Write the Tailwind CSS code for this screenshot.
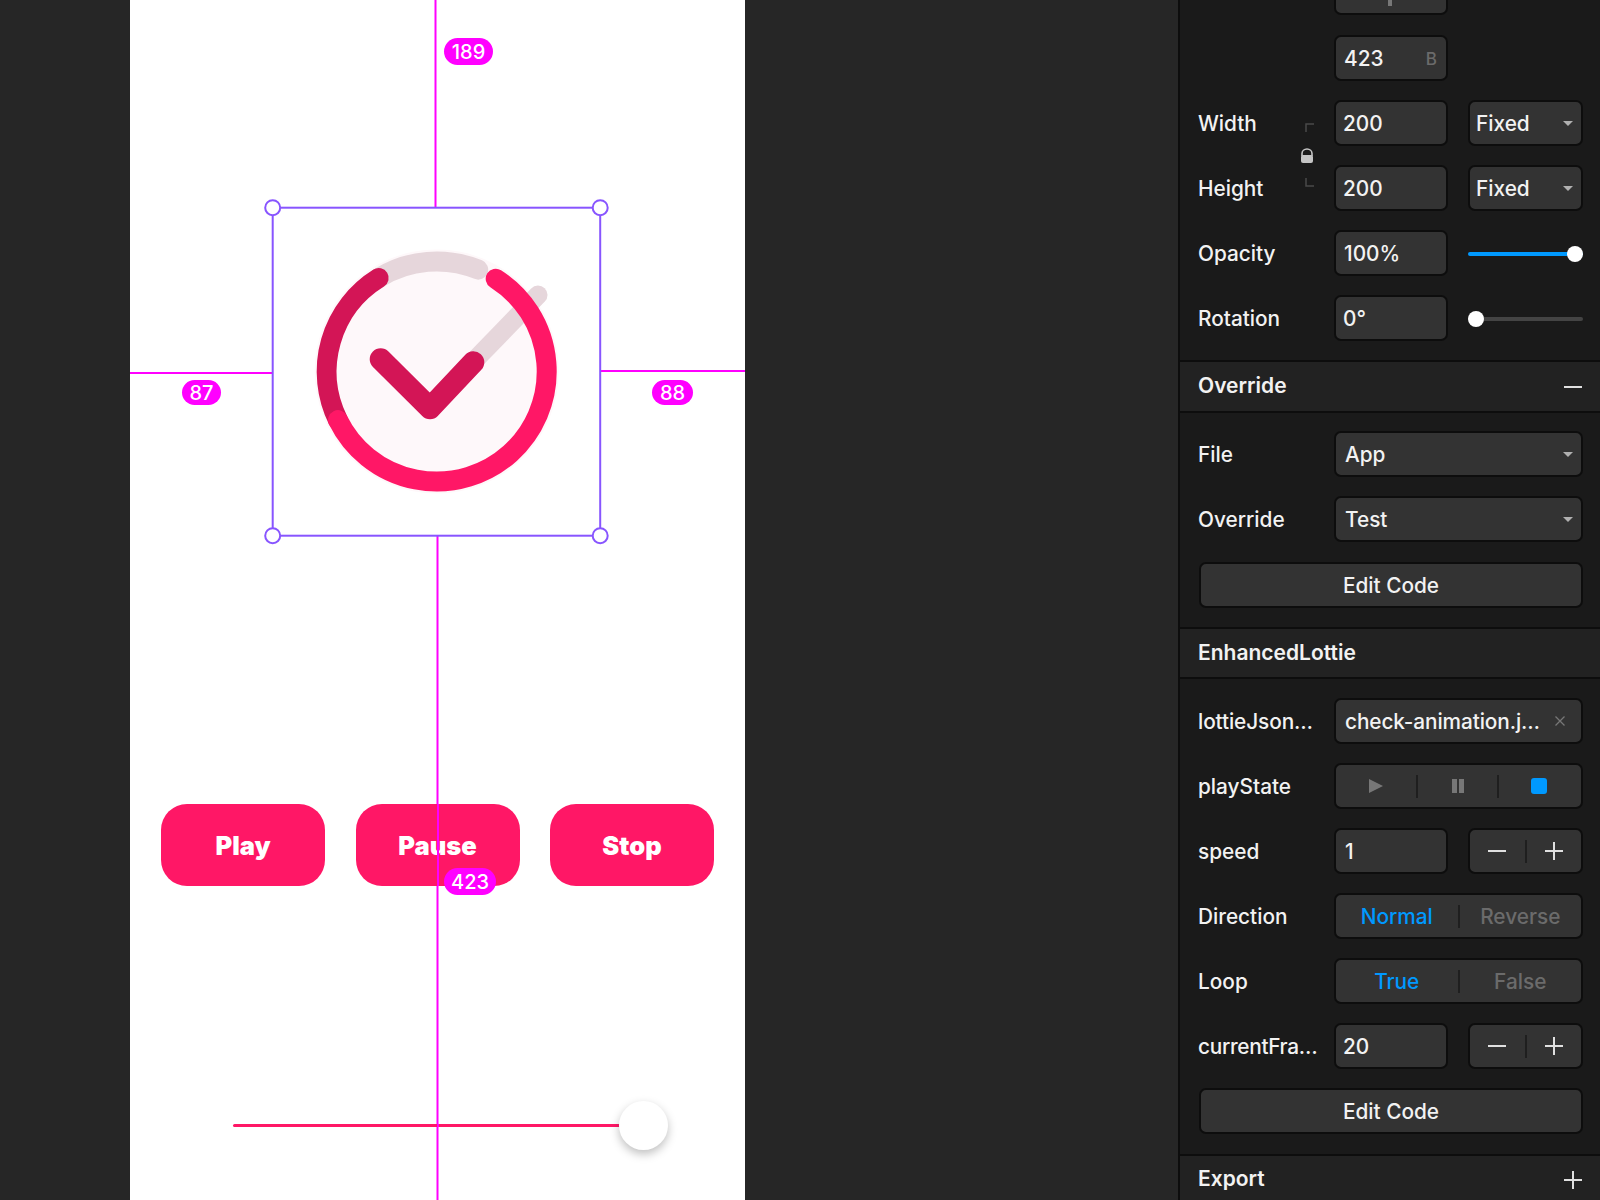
<!DOCTYPE html>
<html lang="en">
<head>
    <meta charset="UTF-8">
    <title>Framer - EnhancedLottie</title>
    <script src="https://cdn.jsdelivr.net/npm/@tailwindcss/browser@4"></script>
</head>
<body class="bg-[#262626] font-['Inter',sans-serif] text-[#f2f2f2] text-[20.8px] font-[450] leading-[21px] overflow-hidden">
<div class="flex h-[1200px] w-[1600px] overflow-hidden">

    <!-- Canvas -->
    <div class="relative w-[1178px] h-full bg-[#262626]">
        <!-- Artboard -->
        <div class="absolute left-[130px] top-0 w-[615px] h-[1200px] bg-white"></div>

        <!-- Lottie preview and selection -->
        <svg class="absolute left-0 top-0" width="1178" height="1200" viewBox="0 0 1178 1200" fill="none">
            <circle cx="436.7" cy="371.5" r="122" fill="#fef8fa"/>
            <path d="M378.7 278 A110 110 0 0 1 478.2 269.6" stroke="#e6d6db" stroke-width="20" stroke-linecap="round"/>
            <path d="M473 362 L538 295" stroke="#e6d6db" stroke-width="19" stroke-linecap="round"/>
            <path d="M378.7 278 A110 110 0 0 0 338 420.1" stroke="#d31556" stroke-width="20" stroke-linecap="round"/>
            <path d="M338 420.1 A110 110 0 1 0 495.7 278.7" stroke="#ff1766" stroke-width="20" stroke-linecap="round"/>
            <path d="M380.7 359.3 L430 408.3 L473.3 362.3" stroke="#d31556" stroke-width="22" stroke-linecap="round" stroke-linejoin="round"/>

            <!-- Distance guides -->
            <path d="M435.5 0 V207 M437.5 536 V1200 M130 373 H272 M601 371 H745" stroke="#ff00ff" stroke-width="2"/>

            <!-- Selection box -->
            <rect x="272.7" y="207.7" width="327.5" height="328" stroke="#8855ff" stroke-width="2"/>
            <g fill="#ffffff" stroke="#8855ff" stroke-width="2">
                <circle cx="272.7" cy="207.7" r="7.5"/>
                <circle cx="600.2" cy="207.7" r="7.5"/>
                <circle cx="272.7" cy="535.7" r="7.5"/>
                <circle cx="600.2" cy="535.7" r="7.5"/>
            </g>
        </svg>

        <!-- Play / Pause / Stop -->
        <div class="absolute left-[161px] top-[804px] w-[553px] h-[82px] flex justify-between text-white text-[25.5px] leading-none font-black">
            <div class="w-[164px] rounded-[26px] bg-[#ff1766] flex items-center justify-center pt-[2px]">Play</div>
            <div class="w-[164px] rounded-[26px] bg-[#ff1766] flex items-center justify-center pt-[2px]">Pause</div>
            <div class="w-[164px] rounded-[26px] bg-[#ff1766] flex items-center justify-center pt-[2px]">Stop</div>
        </div>

        <!-- Guide over the buttons -->
        <div class="absolute left-[436.5px] top-[804px] w-[2px] h-[82px] bg-[#ff00ff]"></div>

        <!-- Slider -->
        <div class="absolute left-[233px] top-[1124px] w-[387px] h-[3px] bg-[#ff1766] rounded-full"></div>
        <div class="absolute left-[436.5px] top-[1124px] w-[2px] h-[3px] bg-[#ff00ff]"></div>
        <div class="absolute left-[619px] top-[1101px] w-[49px] h-[49px] rounded-full bg-white shadow-[0_4px_10px_rgba(0,0,0,0.25)]"></div>

        <!-- Measure badges -->
        <div class="absolute left-[444px] top-[38px] w-[49px] h-[27px] rounded-full bg-[#ff00ff] text-white text-[20px] leading-none font-medium flex items-center justify-center">189</div>
        <div class="absolute left-[182px] top-[380px] w-[39px] h-[25px] rounded-full bg-[#ff00ff] text-white text-[20px] leading-none font-medium flex items-center justify-center">87</div>
        <div class="absolute left-[652px] top-[380px] w-[41px] h-[25px] rounded-full bg-[#ff00ff] text-white text-[20px] leading-none font-medium flex items-center justify-center">88</div>
        <div class="absolute left-[444px] top-[868px] w-[52px] h-[27px] rounded-full bg-[#ff00ff] text-white text-[20px] leading-none font-medium flex items-center justify-center">423</div>
    </div>

    <!-- Properties panel -->
    <div class="w-[422px] h-full border-l-2 border-[#0d0d0d] bg-[#1a1a1a] flex flex-col overflow-hidden">

        <!-- Position, size -->
        <div class="pl-[18px] pr-[17px]">
            <div class="flex items-center h-[46px] mt-[-31px]">
                <div class="w-[136px]"></div>
                <div class="w-[114px] h-full rounded-[7px] border-2 border-[#0d0d0d] bg-[#333333] relative">
                    <div class="absolute left-[52px] bottom-[7px] w-[4px] h-[6px] bg-[#777777]"></div>
                </div>
            </div>
            <div class="flex items-center h-[46px] mt-[20px]">
                <div class="w-[136px]"></div>
                <div class="w-[114px] h-full rounded-[7px] border-2 border-[#0d0d0d] bg-[#333333] flex items-center justify-between pl-[8px] pr-[9px]"><span>423</span><span class="text-[#6b6b6b] text-[17px] pt-[2px]">B</span></div>
            </div>
            <div class="flex items-center h-[46px] mt-[19px] relative">
                <div class="w-[136px]">Width</div>
                <div class="w-[114px] h-full rounded-[7px] border-2 border-[#0d0d0d] bg-[#333333] flex items-center pl-[7px]">200</div>
                <div class="w-[115px] ml-[20px] h-full rounded-[7px] border-2 border-[#0d0d0d] bg-[#333333] flex items-center justify-between pl-[6px] pr-[8px]"><span>Fixed</span><svg width="10" height="5" viewBox="0 0 10 5"><path d="M0 0H10L5 5Z" fill="#b0b0b0"/></svg></div>
                <svg class="absolute left-[107px] top-[23px]" width="9" height="9" viewBox="0 0 9 9" fill="none"><path d="M1 9V1H9" stroke="#4a4a4a" stroke-width="1.5"/></svg>
                <svg class="absolute left-[103px] top-[48px]" width="12" height="15" viewBox="0 0 12 15" fill="none"><path d="M1 8V5.5a5 4.5 0 0 1 10 0V8" stroke="#c4c4c4" stroke-width="1.6"/><rect y="7" width="12" height="8" rx="2" fill="#c4c4c4"/></svg>
            </div>
            <div class="flex items-center h-[46px] mt-[19px] relative">
                <div class="w-[136px]">Height</div>
                <div class="w-[114px] h-full rounded-[7px] border-2 border-[#0d0d0d] bg-[#333333] flex items-center pl-[7px]">200</div>
                <div class="w-[115px] ml-[20px] h-full rounded-[7px] border-2 border-[#0d0d0d] bg-[#333333] flex items-center justify-between pl-[6px] pr-[8px]"><span>Fixed</span><svg width="10" height="5" viewBox="0 0 10 5"><path d="M0 0H10L5 5Z" fill="#b0b0b0"/></svg></div>
                <svg class="absolute left-[107px] top-[13px]" width="9" height="9" viewBox="0 0 9 9" fill="none"><path d="M1 0V8H9" stroke="#4a4a4a" stroke-width="1.5"/></svg>
            </div>
            <div class="flex items-center h-[46px] mt-[19px]">
                <div class="w-[136px]">Opacity</div>
                <div class="w-[114px] h-full rounded-[7px] border-2 border-[#0d0d0d] bg-[#333333] flex items-center pl-[8px]">100%</div>
                <div class="w-[115px] ml-[20px] mt-[2px] h-[4px] rounded-full bg-[#0099ff] relative">
                    <div class="absolute right-0 top-[-6px] w-[16px] h-[16px] rounded-full bg-white"></div>
                </div>
            </div>
            <div class="flex items-center h-[46px] mt-[19px]">
                <div class="w-[136px]">Rotation</div>
                <div class="w-[114px] h-full rounded-[7px] border-2 border-[#0d0d0d] bg-[#333333] flex items-center pl-[7px]">0°</div>
                <div class="w-[115px] ml-[20px] mt-[2px] h-[4px] rounded-full bg-[#444444] relative">
                    <div class="absolute left-0 top-[-6px] w-[16px] h-[16px] rounded-full bg-white"></div>
                </div>
            </div>
        </div>

        <!-- Override -->
        <div class="mt-[19px] h-[53px] shrink-0 border-y-2 border-[#0d0d0d] bg-[#222222] flex items-center justify-between px-[18px] text-[21px] font-semibold">
            <span class="pb-[2px]">Override</span>
            <svg width="18" height="2" viewBox="0 0 18 2"><path d="M0 1H18" stroke="#e0e0e0" stroke-width="2"/></svg>
        </div>
        <div class="pl-[18px] pr-[17px]">
            <div class="flex items-center h-[46px] mt-[18px]">
                <div class="w-[136px]">File</div>
                <div class="w-[249px] h-full rounded-[7px] border-2 border-[#0d0d0d] bg-[#333333] flex items-center justify-between pl-[9px] pr-[8px]"><span>App</span><svg width="10" height="5" viewBox="0 0 10 5"><path d="M0 0H10L5 5Z" fill="#b0b0b0"/></svg></div>
            </div>
            <div class="flex items-center h-[46px] mt-[19px]">
                <div class="w-[136px]">Override</div>
                <div class="w-[249px] h-full rounded-[7px] border-2 border-[#0d0d0d] bg-[#333333] flex items-center justify-between pl-[9px] pr-[8px]"><span>Test</span><svg width="10" height="5" viewBox="0 0 10 5"><path d="M0 0H10L5 5Z" fill="#b0b0b0"/></svg></div>
            </div>
            <div class="ml-[1px] mt-[20px] h-[46px] rounded-[7px] border-2 border-[#0d0d0d] bg-[#333333] flex items-center justify-center">Edit Code</div>
        </div>

        <!-- EnhancedLottie -->
        <div class="mt-[19px] h-[52px] shrink-0 border-y-2 border-[#0d0d0d] bg-[#222222] flex items-center px-[18px] pb-[2px] text-[21px] font-semibold">EnhancedLottie</div>
        <div class="pl-[18px] pr-[17px]">
            <div class="flex items-center h-[46px] mt-[19px]">
                <div class="w-[136px] tracking-[-0.1px]">lottieJson…</div>
                <div class="w-[249px] h-full rounded-[7px] border-2 border-[#0d0d0d] bg-[#333333] flex items-center justify-between pl-[9px] pr-[16px]"><span class="tracking-[-0.1px]">check-animation.j…</span><svg width="10" height="10" viewBox="0 0 10 10" fill="none"><path d="M0.5 0.5L9.5 9.5M9.5 0.5L0.5 9.5" stroke="#777777" stroke-width="1.3"/></svg></div>
            </div>
            <div class="flex items-center h-[46px] mt-[19px]">
                <div class="w-[136px]">playState</div>
                <div class="w-[249px] h-full rounded-[7px] border-2 border-[#0d0d0d] bg-[#333333] flex items-center">
                    <div class="flex-1 flex items-center justify-center"><svg width="14" height="14" viewBox="0 0 14 14"><path d="M0 0L14 7L0 14Z" fill="#777777"/></svg></div>
                    <div class="w-[2px] h-[23px] bg-[#1f1f1f]"></div>
                    <div class="flex-1 flex items-center justify-center"><svg width="12" height="14" viewBox="0 0 12 14" fill="#777777"><rect width="5" height="14"/><rect x="7" width="5" height="14"/></svg></div>
                    <div class="w-[2px] h-[23px] bg-[#1f1f1f]"></div>
                    <div class="flex-1 flex items-center justify-center pr-[2px]"><div class="w-[16px] h-[16px] rounded-[3px] bg-[#0099ff]"></div></div>
                </div>
            </div>
            <div class="flex items-center h-[46px] mt-[19px]">
                <div class="w-[136px]">speed</div>
                <div class="w-[114px] h-full rounded-[7px] border-2 border-[#0d0d0d] bg-[#333333] flex items-center pl-[9px]">1</div>
                <div class="w-[115px] ml-[20px] h-full rounded-[7px] border-2 border-[#0d0d0d] bg-[#333333] flex items-center">
                    <div class="flex-1 flex items-center justify-center"><svg width="18" height="18" viewBox="0 0 18 18"><path d="M0 9H18" stroke="#e0e0e0" stroke-width="2"/></svg></div>
                    <div class="w-[2px] h-[23px] bg-[#1f1f1f]"></div>
                    <div class="flex-1 flex items-center justify-center"><svg width="18" height="18" viewBox="0 0 18 18"><path d="M0 9H18M9 0V18" stroke="#e0e0e0" stroke-width="2"/></svg></div>
                </div>
            </div>
            <div class="flex items-center h-[46px] mt-[19px]">
                <div class="w-[136px]">Direction</div>
                <div class="w-[249px] h-full rounded-[7px] border-2 border-[#0d0d0d] bg-[#333333] flex items-center">
                    <div class="flex-1 text-center text-[#0099ff]">Normal</div>
                    <div class="w-[2px] h-[23px] bg-[#1f1f1f]"></div>
                    <div class="flex-1 text-center text-[#6b6b6b]">Reverse</div>
                </div>
            </div>
            <div class="flex items-center h-[46px] mt-[19px]">
                <div class="w-[136px]">Loop</div>
                <div class="w-[249px] h-full rounded-[7px] border-2 border-[#0d0d0d] bg-[#333333] flex items-center">
                    <div class="flex-1 text-center text-[#0099ff]">True</div>
                    <div class="w-[2px] h-[23px] bg-[#1f1f1f]"></div>
                    <div class="flex-1 text-center text-[#6b6b6b]">False</div>
                </div>
            </div>
            <div class="flex items-center h-[46px] mt-[19px]">
                <div class="w-[136px] tracking-[-0.3px]">currentFra…</div>
                <div class="w-[114px] h-full rounded-[7px] border-2 border-[#0d0d0d] bg-[#333333] flex items-center pl-[7px]">20</div>
                <div class="w-[115px] ml-[20px] h-full rounded-[7px] border-2 border-[#0d0d0d] bg-[#333333] flex items-center">
                    <div class="flex-1 flex items-center justify-center"><svg width="18" height="18" viewBox="0 0 18 18"><path d="M0 9H18" stroke="#e0e0e0" stroke-width="2"/></svg></div>
                    <div class="w-[2px] h-[23px] bg-[#1f1f1f]"></div>
                    <div class="flex-1 flex items-center justify-center"><svg width="18" height="18" viewBox="0 0 18 18"><path d="M0 9H18M9 0V18" stroke="#e0e0e0" stroke-width="2"/></svg></div>
                </div>
            </div>
            <div class="ml-[1px] mt-[19px] h-[46px] rounded-[7px] border-2 border-[#0d0d0d] bg-[#333333] flex items-center justify-center">Edit Code</div>
        </div>

        <!-- Export -->
        <div class="mt-[20px] h-[52px] shrink-0 border-t-2 border-[#0d0d0d] bg-[#222222] flex items-center justify-between px-[18px] pb-[2px] text-[21px] font-semibold">
            <span class="pb-[3px]">Export</span>
            <svg width="18" height="18" viewBox="0 0 18 18"><path d="M0 9H18M9 0V18" stroke="#e0e0e0" stroke-width="2"/></svg>
        </div>
    </div>
</div>
</body>
</html>
